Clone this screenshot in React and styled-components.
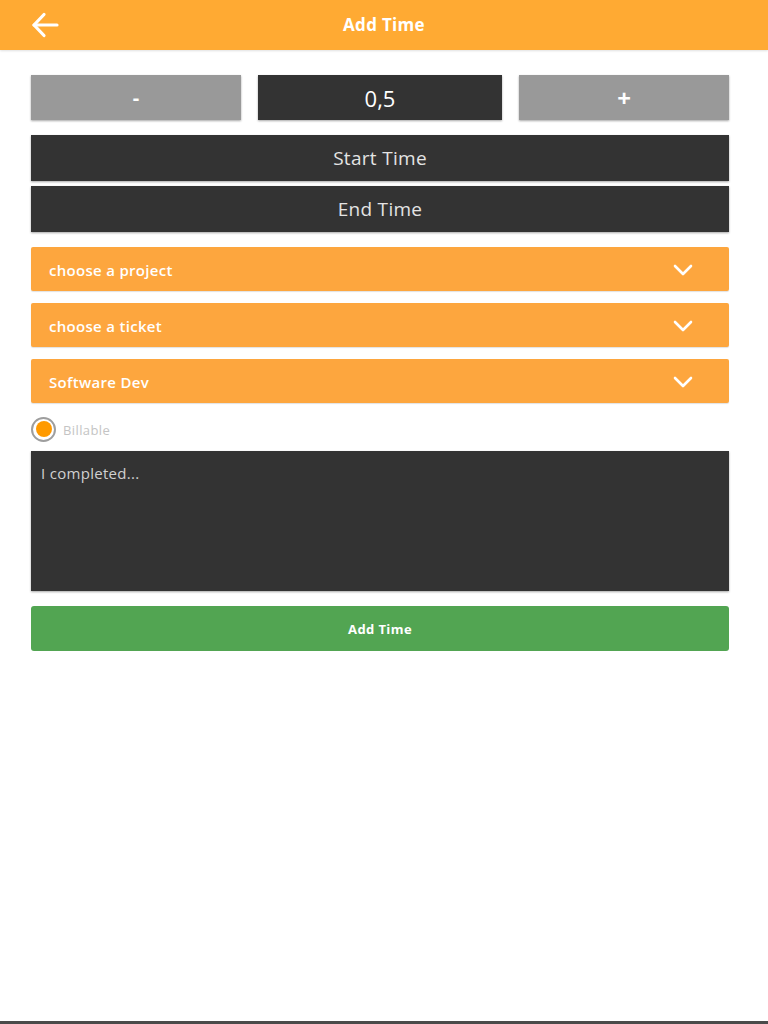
import React from 'react';
import styled, { createGlobalStyle } from 'styled-components';

const GlobalStyle = createGlobalStyle`
  html, body {
    margin: 0;
    padding: 0;
    background: #fff;
    font-family: 'Open Sans', 'Liberation Sans', sans-serif;
  }
  * { box-sizing: border-box; }
`;

const Page = styled.div`
  min-height: 100vh;
  display: flex;
  flex-direction: column;
  border-bottom: 3px solid #4a4a4a;
`;

const Header = styled.header`
  height: 50px;
  background: #ffaa33;
  display: flex;
  align-items: center;
  justify-content: center;
  position: relative;
  box-shadow: 0 1px 2px rgba(0, 0, 0, 0.12);
`;

const BackButton = styled.button`
  position: absolute;
  left: 30px;
  top: 11px;
  width: 30px;
  height: 28px;
  padding: 0;
  border: none;
  background: transparent;
  display: flex;
  align-items: center;
  justify-content: center;
  cursor: pointer;
`;

const Title = styled.h1`
  margin: 0 0 1px;
  color: #fff;
  font-size: 17px;
  font-weight: 700;
  letter-spacing: 0.3px;
`;

const Content = styled.main`
  padding: 25px 39px 0 31px;
  display: flex;
  flex-direction: column;
`;

const Stepper = styled.div`
  display: grid;
  grid-template-columns: 210px 1fr 210px;
  column-gap: 17px;
  height: 45px;
  margin-bottom: 15px;
`;

const Block = styled.div`
  display: flex;
  align-items: center;
  justify-content: center;
  color: #fff;
  background: ${p => (p.dark ? '#333333' : '#999999')};
  font-size: ${p => p.size || 18}px;
  font-weight: ${p => p.weight || 400};
  box-shadow: 0 1px 2px rgba(0, 0, 0, 0.35);
`;

const TimeButton = styled.div`
  height: 46px;
  background: #333333;
  color: #e4e4e4;
  display: flex;
  align-items: center;
  justify-content: center;
  font-size: 19px;
  letter-spacing: 0.3px;
  margin-bottom: 5px;
  box-shadow: 0 1px 2px rgba(0, 0, 0, 0.35);
`;

const Select = styled.div`
  height: 44px;
  background: #fda63e;
  border-radius: 2px;
  color: #fff;
  display: flex;
  align-items: center;
  justify-content: space-between;
  padding: 2px 36px 0 18px;
  font-size: 15px;
  font-weight: 600;
  letter-spacing: 0.3px;
  margin-top: ${p => p.first ? '10px' : '12px'};
  box-shadow: 0 1px 1px rgba(0, 0, 0, 0.12);
`;

const RadioRow = styled.label`
  display: flex;
  align-items: center;
  gap: 7px;
  height: 26px;
  margin-top: 13px;
`;

const Radio = styled.span`
  width: 25px;
  height: 25px;
  border-radius: 50%;
  border: 2px solid #9e9e9e;
  display: flex;
  align-items: center;
  justify-content: center;
  background: #fff;

  &::after {
    content: '';
    width: 16px;
    height: 16px;
    border-radius: 50%;
    background: #ff9a00;
  }
`;

const RadioLabel = styled.span`
  font-size: 13px;
  color: #c4c4c4;
  letter-spacing: 0.4px;
  margin-top: 2px;
`;

const Notes = styled.textarea`
  margin-top: 9px;
  height: 140px;
  width: 100%;
  resize: none;
  border: none;
  outline: none;
  background: #333333;
  color: #ddd;
  padding: 12px 10px;
  font-family: 'Open Sans', 'Liberation Sans', sans-serif;
  font-size: 15px;
  letter-spacing: 0.3px;
  box-shadow: 0 1px 2px rgba(0, 0, 0, 0.35);

  &::placeholder {
    color: #d0d0d0;
  }
`;

const Submit = styled.button`
  margin-top: 15px;
  height: 45px;
  border: none;
  border-radius: 3px;
  background: #52a552;
  color: #fff;
  font-family: 'Open Sans', 'Liberation Sans', sans-serif;
  font-size: 13px;
  font-weight: 700;
  letter-spacing: 0.4px;
  cursor: pointer;
`;

const ArrowIcon = () => (
  <svg width="28" height="26" viewBox="0 0 28 26" fill="none" stroke="#fff" strokeWidth="3.2" strokeLinecap="round" strokeLinejoin="round">
    <line x1="3" y1="13" x2="26" y2="13" />
    <polyline points="13,2.5 3,13 13,23.5" />
  </svg>
);

const Chevron = () => (
  <svg width="20" height="12" viewBox="0 0 20 12" fill="none" stroke="#fff" strokeWidth="2.6" strokeLinecap="round" strokeLinejoin="round">
    <polyline points="2,2 10,10 18,2" />
  </svg>
);

const selects = ['choose a project', 'choose a ticket', 'Software Dev'];

export default function App() {
  return (
    <Page>
      <GlobalStyle />
      <Header>
        <BackButton aria-label="back"><ArrowIcon /></BackButton>
        <Title>Add Time</Title>
      </Header>
      <Content>
        <Stepper>
          <Block size={20} weight={700}>-</Block>
          <Block dark size={22}>0,5</Block>
          <Block size={24} weight={700}>+</Block>
        </Stepper>
        <TimeButton>Start Time</TimeButton>
        <TimeButton>End Time</TimeButton>
        {selects.map((s, i) => (
          <Select key={s} first={i === 0}>
            <span>{s}</span>
            <Chevron />
          </Select>
        ))}
        <RadioRow>
          <Radio />
          <RadioLabel>Billable</RadioLabel>
        </RadioRow>
        <Notes placeholder="I completed..." />
        <Submit>Add Time</Submit>
      </Content>
    </Page>
  );
}
